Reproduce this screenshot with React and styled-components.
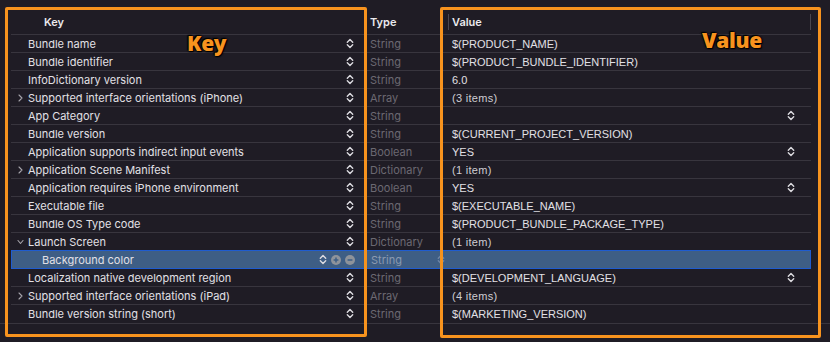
import React from "react";
import styled, { createGlobalStyle } from "styled-components";

const Global = createGlobalStyle`
  html, body { margin: 0; padding: 0; background: #1f1c25; }
  body { width: 830px; height: 342px; overflow: hidden; font-family: "Liberation Sans", Arial, sans-serif; }
`;

const Page = styled.div`
  position: relative;
  width: 830px;
  height: 342px;
  background: #1f1c25;
  padding-top: 10px;
  box-sizing: border-box;
`;

const Table = styled.div`
  margin-left: 11px;
  width: 800px;
`;

const cols = "352px 85px 363px";

const HeaderRow = styled.div`
  display: grid;
  grid-template-columns: ${cols};
  height: 25px;
  border-bottom: 1px solid #38353e;
  box-sizing: border-box;
`;

const HeaderCell = styled.div`
  display: flex;
  align-items: center;
  position: relative;
  padding-left: ${(p) => p.$pad}px;
  font-family: "Inter", "Liberation Sans", sans-serif;
  font-size: 11px;
  font-weight: 600;
  color: #ebeaee;
  ${(p) =>
    p.$sep &&
    `&::before { content: ""; position: absolute; left: 0; top: 4px; height: 16px; width: 1px; background: #4a4750; }`}
  ${(p) =>
    p.$endSep &&
    `&::after { content: ""; position: absolute; right: 0; top: 4px; height: 16px; width: 1px; background: #4a4750; }`}
`;

const Row = styled.div`
  display: grid;
  grid-template-columns: ${cols};
  height: 18px;
  box-sizing: border-box;
  font-size: 11px;
  border-bottom: 1px solid ${(p) => (p.$last ? "transparent" : "#38353e")};
  ${(p) =>
    p.$selected &&
    `background: #3e5e85; border: 1px solid #1f5cd0; margin-top: -1px; height: 19px;`}
`;

const KeyCell = styled.div`
  display: flex;
  align-items: center;
  padding-left: ${(p) => 6 + p.$indent * 13}px;
  padding-right: 9px;
  color: #e2e0e6;
  min-width: 0;
  font-family: "Inter", "Liberation Sans", sans-serif;
`;

const Disclosure = styled.span`
  width: 11px;
  flex: 0 0 11px;
  display: flex;
  align-items: center;
`;

const KeyText = styled.span`
  flex: 1;
  white-space: nowrap;
`;

const TypeCell = styled.div`
  display: flex;
  align-items: center;
  padding-left: 7px;
  padding-right: 4px;
  font-family: "Inter", "Liberation Sans", sans-serif;
  color: ${(p) => (p.$selected ? "#8b9ab0" : "#6c6972")};
  justify-content: space-between;
`;

const ValueCell = styled.div`
  display: flex;
  align-items: center;
  justify-content: space-between;
  padding-left: 4px;
  padding-right: 16px;
  color: ${(p) => (p.$dim ? "#cfcdd3" : "#e2e0e6")};
  white-space: nowrap;
  letter-spacing: ${(p) => (p.$dim ? "0.3px" : "0")};
`;

const Controls = styled.span`
  display: flex;
  align-items: center;
  gap: 4px;
`;

const BottomRule = styled.div`
  height: 1px;
  background: #38353e;
  width: 830px;
`;

const Callout = styled.div`
  position: absolute;
  left: ${(p) => p.$x}px;
  top: ${(p) => p.$y}px;
  width: ${(p) => p.$w}px;
  height: ${(p) => p.$h}px;
  border: 3px solid #f7931e;
  border-radius: 2px;
  box-sizing: border-box;
  pointer-events: none;
`;

const CalloutLabel = styled.div`
  position: absolute;
  left: ${(p) => p.$x}px;
  top: ${(p) => p.$y}px;
  font-family: "Open Sans", "Liberation Sans", sans-serif;
  font-weight: 800;
  font-size: 21px;
  color: #f7931e;
  letter-spacing: -0.3px;
  text-shadow: 0 0 2px #000, 0 0 2px #000, 1px 1px 1px #000, -1px -1px 1px #000;
`;

const Stepper = ({ color = "#dcdbe0" }) => (
  <svg width="8" height="11" viewBox="0 0 8 11">
    <path d="M1.3 4.2 L4 1.5 L6.7 4.2" fill="none" stroke={color} strokeWidth="1.4" strokeLinecap="round" strokeLinejoin="round" />
    <path d="M1.3 6.8 L4 9.5 L6.7 6.8" fill="none" stroke={color} strokeWidth="1.4" strokeLinecap="round" strokeLinejoin="round" />
  </svg>
);

const Chevron = ({ open }) => (
  <svg width="7" height="8" viewBox="0 0 7 8">
    {open ? (
      <path d="M1 2.5 L3.5 5.5 L6 2.5" fill="none" stroke="#a6a4ab" strokeWidth="1.1" strokeLinecap="round" strokeLinejoin="round" />
    ) : (
      <path d="M2 1 L5 4 L2 7" fill="none" stroke="#a6a4ab" strokeWidth="1.1" strokeLinecap="round" strokeLinejoin="round" />
    )}
  </svg>
);

const CircleBtn = ({ kind }) => (
  <svg width="10" height="10" viewBox="0 0 10 10">
    <circle cx="5" cy="5" r="5" fill="#8e939b" />
    <path d="M2.6 5 H7.4" stroke="#3e5e85" strokeWidth="1.5" />
    {kind === "plus" && <path d="M5 2.6 V7.4" stroke="#3e5e85" strokeWidth="1.5" />}
  </svg>
);

const rows = [
  { k: "Bundle name", t: "String", v: "$(PRODUCT_NAME)" },
  { k: "Bundle identifier", t: "String", v: "$(PRODUCT_BUNDLE_IDENTIFIER)" },
  { k: "InfoDictionary version", t: "String", v: "6.0" },
  { k: "Supported interface orientations (iPhone)", t: "Array", v: "(3 items)", d: "closed", dim: true },
  { k: "App Category", t: "String", v: "", vs: true },
  { k: "Bundle version", t: "String", v: "$(CURRENT_PROJECT_VERSION)" },
  { k: "Application supports indirect input events", t: "Boolean", v: "YES", vs: true },
  { k: "Application Scene Manifest", t: "Dictionary", v: "(1 item)", d: "closed", dim: true },
  { k: "Application requires iPhone environment", t: "Boolean", v: "YES", vs: true },
  { k: "Executable file", t: "String", v: "$(EXECUTABLE_NAME)" },
  { k: "Bundle OS Type code", t: "String", v: "$(PRODUCT_BUNDLE_PACKAGE_TYPE)" },
  { k: "Launch Screen", t: "Dictionary", v: "(1 item)", d: "open", dim: true },
  { k: "Background color", t: "String", v: "", indent: 1, sel: true },
  { k: "Localization native development region", t: "String", v: "$(DEVELOPMENT_LANGUAGE)", vs: true },
  { k: "Supported interface orientations (iPad)", t: "Array", v: "(4 items)", d: "closed", dim: true },
  { k: "Bundle version string (short)", t: "String", v: "$(MARKETING_VERSION)" },
];

export default function App() {
  return (
    <>
      <Global />
      <Page>
        <Table>
          <HeaderRow>
            <HeaderCell $pad={33}>Key</HeaderCell>
            <HeaderCell $pad={7}>Type</HeaderCell>
            <HeaderCell $pad={4} $sep $endSep>Value</HeaderCell>
          </HeaderRow>
          {rows.map((r, i) => (
            <Row key={i} $selected={r.sel} $last={i === rows.length - 1}>
              <KeyCell $indent={r.indent || 0}>
                <Disclosure>{r.d && <Chevron open={r.d === "open"} />}</Disclosure>
                <KeyText>{r.k}</KeyText>
                {r.sel ? (
                  <Controls>
                    <Stepper />
                    <CircleBtn kind="plus" />
                    <CircleBtn kind="minus" />
                  </Controls>
                ) : (
                  <Stepper />
                )}
              </KeyCell>
              <TypeCell $selected={r.sel}>
                <span>{r.t}</span>
                {r.sel && <Stepper color="#6f86a6" />}
              </TypeCell>
              <ValueCell $dim={r.dim}>
                <span>{r.v}</span>
                {r.vs && <Stepper />}
              </ValueCell>
            </Row>
          ))}
        </Table>
        <BottomRule />
        <Callout $x={5} $y={7} $w={362} $h={330} />
        <Callout $x={440} $y={7} $w={381} $h={331} />
        <CalloutLabel $x={187} $y={29}>Key</CalloutLabel>
        <CalloutLabel $x={702} $y={26}>Value</CalloutLabel>
      </Page>
    </>
  );
}
